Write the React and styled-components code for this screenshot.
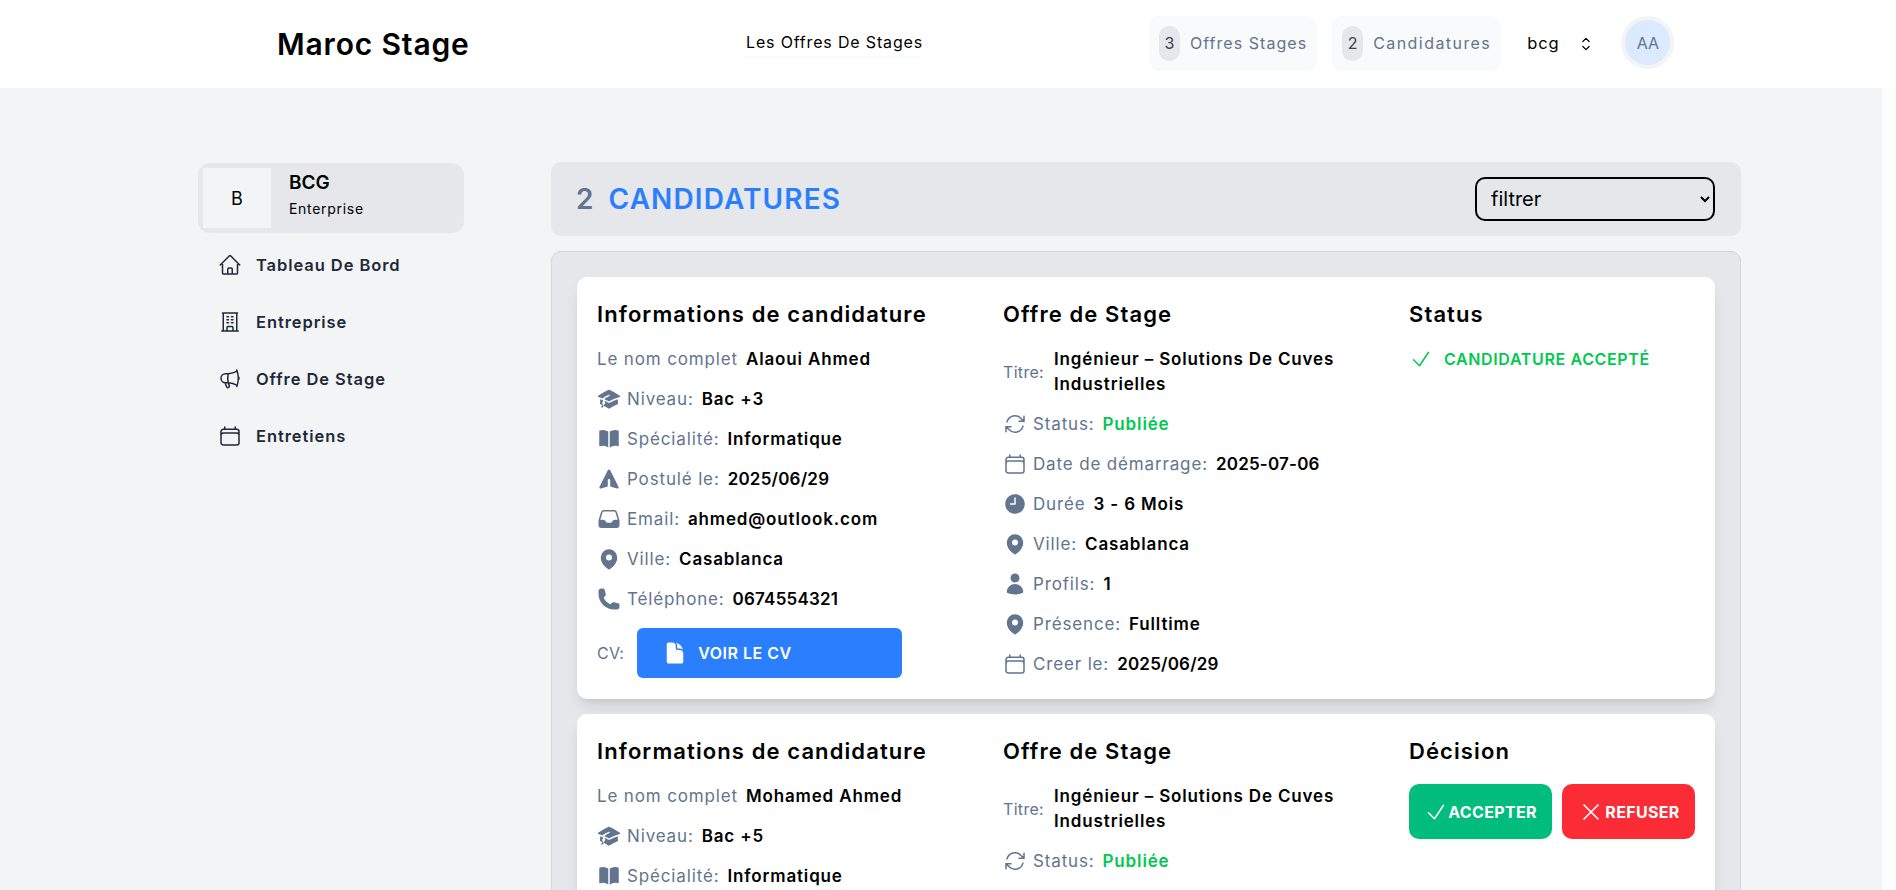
import styled, { createGlobalStyle } from 'styled-components'
import {
    HiAcademicCap, HiBookOpen, HiInbox, HiMapPin, HiPhone, HiClock, HiUser, HiDocument,
    HiOutlineArrowPath, HiOutlineCalendar, HiOutlineCheck, HiOutlineXMark, HiOutlineChevronUpDown,
    HiOutlineHome, HiOutlineBuildingOffice, HiOutlineMegaphone,
} from 'react-icons/hi2'
import { HiPaperAirplane } from 'react-icons/hi'

const GlobalStyle = createGlobalStyle`
    html, body {
        margin: 0;
        height: 100%;
        overflow: hidden;
    }
    body {
        font-family: Inter, "Liberation Sans", sans-serif;
        background: white;
        color: #000;
    }
`
const Page = styled.div`
    height: 100vh;
    display: flex;
`
const Screen = styled.div`
    flex: 1;
    min-width: 0;
    overflow: hidden;
    background: #f3f4f6;
`
const ScrollGutter = styled.div`
    width: 14px;
    margin-top: 88px;
    background: #fdfdfd;
`
const Navbar = styled.nav`
    height: 88px;
    background: white;
    padding-left: 277px;
    display: grid;
    grid-template-columns: 469px 403px auto;
    align-items: center;
`
const Logo = styled.div`
    font-size: 30px;
    font-weight: 600;
    letter-spacing: .028em;
`
const NavLink = styled.a`
    justify-self: start;
    font-size: 16px;
    line-height: 24px;
    padding-bottom: 2px;
    border-bottom: 2px solid #f9fafb;
    letter-spacing: .052em;
`
const NavRight = styled.div`
    display: flex;
    align-items: center;
    margin-bottom: 2px;
`
const CountButton = styled.div`
    height: 55px;
    padding: 0 10px;
    margin-right: 15px;
    display: flex;
    align-items: center;
    gap: 10px;
    background: #f9fafb;
    border-radius: 10px;
    color: #62748e;
    font-size: 16px;
    letter-spacing: ${props => props.$spacing};
    span {
        width: 21px;
        height: 35px;
        display: flex;
        align-items: center;
        justify-content: center;
        background: #e5e7eb;
        border-radius: 10px;
        color: #364153;
        letter-spacing: 0;
    }
`
const CompanySwitch = styled.div`
    display: flex;
    align-items: center;
    gap: 17px;
    margin-left: 11px;
    font-size: 16.5px;
    letter-spacing: .05em;
    svg {
        width: 20px;
        height: 20px;
        margin-top: 1px;
    }
`
const Avatar = styled.div`
    width: 45px;
    height: 45px;
    margin: 0 0 1px 25px;
    display: flex;
    align-items: center;
    justify-content: center;
    background: #dbeafe;
    border: 4px solid #f3f4f6;
    border-radius: 50%;
    color: #62748e;
    font-size: 16px;
`
const Body = styled.div`
    padding: 74px 141px 40px 198px;
    display: grid;
    grid-template-columns: 266px 1fr;
    column-gap: 87px;
    align-items: start;
`
const Sidebar = styled.aside`
    padding-top: 1px;
`
const BrandCard = styled.div`
    height: 70px;
    box-sizing: border-box;
    padding: 5px;
    display: flex;
    align-items: center;
    gap: 18px;
    background: #e5e7eb;
    border-radius: 12px;
`
const BrandSquare = styled.div`
    width: 68px;
    height: 60px;
    display: flex;
    align-items: center;
    justify-content: center;
    background: #f3f4f6;
    font-size: 18px;
`
const BrandText = styled.div`
    padding-bottom: 5px;
`
const BrandName = styled.div`
    font-size: 19px;
    font-weight: 600;
    line-height: 26px;
`
const BrandType = styled.div`
    font-size: 14px;
    line-height: 25px;
    letter-spacing: .05em;
`
const SideMenu = styled.ul`
    list-style: none;
    margin: 3px 0 0;
    padding: 0;
`
const SideItem = styled.li`
    height: 57px;
    padding-left: 20px;
    display: flex;
    align-items: center;
    gap: 14px;
    color: #1e2939;
    font-size: 16.5px;
    font-weight: 600;
    letter-spacing: .056em;
    svg {
        width: 24px;
        height: 24px;
    }
`
const Main = styled.main`
    min-width: 0;
`
const Header = styled.div`
    height: 74px;
    box-sizing: border-box;
    padding: 0 26px 0 25px;
    display: flex;
    align-items: center;
    justify-content: space-between;
    background: #e5e7eb;
    border-radius: 10px;
`
const Title = styled.h1`
    margin: 0;
    display: flex;
    gap: 14px;
    font-size: 28px;
    font-weight: 600;
    letter-spacing: .04em;
    color: #2b7fff;
    span {
        color: #62748e;
    }
`
const FilterSelect = styled.select`
    width: 240px;
    height: 44px;
    padding: 0 10px;
    background: transparent;
    border: 2px solid #000;
    border-radius: 10px;
    font-family: inherit;
    font-size: 20px;
    color: #000;
`
const Panel = styled.div`
    margin-top: 15px;
    padding: 25px;
    display: flex;
    flex-direction: column;
    gap: 15px;
    background: #e5e7eb;
    border: 1px solid #d1d5dc;
    border-radius: 10px;
`
const Card = styled.article`
    padding: 23px 20px 21px;
    display: grid;
    grid-template-columns: 406px 406px 1fr;
    background: white;
    border-radius: 10px;
    box-shadow: 0 10px 15px -3px rgba(0, 0, 0, .1), 0 4px 6px -4px rgba(0, 0, 0, .1);
`
const Column = styled.section`
    display: flex;
    flex-direction: column;
    gap: 16px;
`
const ColumnTitle = styled.h2`
    margin: 0 0 3px;
    font-size: 22px;
    line-height: 28px;
    font-weight: 600;
    letter-spacing: .05em;
`
const Row = styled.div`
    min-height: 24px;
    display: flex;
    align-items: center;
    font-size: 17px;
    white-space: nowrap;
    letter-spacing: .05em;
    svg {
        flex: none;
        width: 24px;
        height: 24px;
        margin-right: 6px;
        color: #62748e;
    }
`
const Label = styled.span`
    color: #62748e;
    margin-right: 8px;
`
const TitreLabel = styled(Label)`
    font-size: 16px;
    letter-spacing: .02em;
    margin-right: 10px;
`
const Value = styled.span`
    font-weight: 600;
    color: ${props => props.$green ? '#00c950' : '#000'};
    line-height: ${props => props.$wrap ? '24.5px' : '24px'};
    letter-spacing: ${props => props.$digits ? '.012em' : 'inherit'};
    white-space: ${props => props.$wrap ? 'normal' : 'nowrap'};
`
const CvButton = styled.button`
    width: 265px;
    height: 50px;
    padding: 0 0 0 26px;
    display: flex;
    align-items: center;
    gap: 11px;
    background: #2b7fff;
    border: none;
    border-radius: 6px;
    color: white;
    font-family: inherit;
    font-size: 16px;
    font-weight: 600;
    letter-spacing: .03em;
    svg {
        margin: 0;
        color: white;
    }
`
const CvRow = styled(Row)`
    margin-top: 1px;
`
const CvLabel = styled(TitreLabel)`
    margin-right: 13px;
`
const StatusLine = styled.div`
    display: flex;
    align-items: center;
    gap: 11px;
    height: 24px;
    color: #00c950;
    font-size: 16px;
    font-weight: 600;
    letter-spacing: .04em;
    svg {
        width: 24px;
        height: 24px;
    }
`
const Decisions = styled.div`
    display: flex;
    gap: 10px;
`
const DecisionButton = styled.button`
    width: ${props => props.$w}px;
    height: 55px;
    padding: 0;
    display: flex;
    align-items: center;
    justify-content: center;
    background: ${props => props.$bg};
    border: none;
    border-radius: 10px;
    color: white;
    font-family: inherit;
    font-size: 16px;
    font-weight: 700;
    letter-spacing: .02em;
    svg {
        width: ${props => props.$icon}px;
        height: ${props => props.$icon}px;
    }
`
const ClockIcon = styled(HiClock)`
    transform: scaleX(-1);
`

const candidatures = [
    {
        nom: 'Alaoui Ahmed', niveau: 'Bac +3', postule: '2025/06/29', email: 'ahmed@outlook.com',
        tel: '0674554321', accepted: true,
    },
    {
        nom: 'Mohamed Ahmed', niveau: 'Bac +5', postule: '2025/06/29', email: 'mohamed@outlook.com',
        tel: '0674554321', accepted: false,
    },
]

const Info = ({ icon, label, value, green, digits }) => (
    <Row>
        {icon}
        <Label>{label}</Label>
        <Value $green={green} $digits={digits}>{value}</Value>
    </Row>
)

const App = () => {
    return (
        <Page>
            <GlobalStyle />
            <Screen>
                <Navbar>
                    <Logo>Maroc Stage</Logo>
                    <NavLink>Les Offres De Stages</NavLink>
                    <NavRight>
                        <CountButton $spacing=".065em"><span>3</span>Offres Stages</CountButton>
                        <CountButton $spacing=".09em"><span>2</span>Candidatures</CountButton>
                        <CompanySwitch>bcg <HiOutlineChevronUpDown /></CompanySwitch>
                        <Avatar>AA</Avatar>
                    </NavRight>
                </Navbar>
                <Body>
                    <Sidebar>
                        <BrandCard>
                            <BrandSquare>B</BrandSquare>
                            <BrandText>
                                <BrandName>BCG</BrandName>
                                <BrandType>Enterprise</BrandType>
                            </BrandText>
                        </BrandCard>
                        <SideMenu>
                            <SideItem><HiOutlineHome />Tableau De Bord</SideItem>
                            <SideItem><HiOutlineBuildingOffice />Entreprise</SideItem>
                            <SideItem><HiOutlineMegaphone />Offre De Stage</SideItem>
                            <SideItem><HiOutlineCalendar />Entretiens</SideItem>
                        </SideMenu>
                    </Sidebar>
                    <Main>
                        <Header>
                            <Title><span>2</span>CANDIDATURES</Title>
                            <FilterSelect defaultValue="">
                                <option value="">filtrer</option>
                            </FilterSelect>
                        </Header>
                        <Panel>
                            {candidatures.map(c => (
                                <Card key={c.nom}>
                                    <Column>
                                        <ColumnTitle>Informations de candidature</ColumnTitle>
                                        <Info label="Le nom complet" value={c.nom} />
                                        <Info icon={<HiAcademicCap />} label="Niveau:" value={c.niveau} />
                                        <Info icon={<HiBookOpen />} label="Spécialité:" value="Informatique" />
                                        <Info icon={<HiPaperAirplane />} label="Postulé le:" value={c.postule} digits />
                                        <Info icon={<HiInbox />} label="Email:" value={c.email} />
                                        <Info icon={<HiMapPin />} label="Ville:" value="Casablanca" />
                                        <Info icon={<HiPhone />} label="Téléphone:" value={c.tel} digits />
                                        <CvRow>
                                            <CvLabel>CV:</CvLabel>
                                            <CvButton><HiDocument />VOIR LE CV</CvButton>
                                        </CvRow>
                                    </Column>
                                    <Column>
                                        <ColumnTitle>Offre de Stage</ColumnTitle>
                                        <Row>
                                            <TitreLabel>Titre:</TitreLabel>
                                            <Value $wrap>Ingénieur – Solutions De Cuves Industrielles</Value>
                                        </Row>
                                        <Info icon={<HiOutlineArrowPath />} label="Status:" value="Publiée" green />
                                        <Info icon={<HiOutlineCalendar />} label="Date de démarrage:" value="2025-07-06" digits />
                                        <Info icon={<ClockIcon />} label="Durée" value="3 - 6 Mois" />
                                        <Info icon={<HiMapPin />} label="Ville:" value="Casablanca" />
                                        <Info icon={<HiUser />} label="Profils:" value="1" />
                                        <Info icon={<HiMapPin />} label="Présence:" value="Fulltime" />
                                        <Info icon={<HiOutlineCalendar />} label="Creer le:" value="2025/06/29" digits />
                                    </Column>
                                    <Column>
                                        {c.accepted ? (
                                            <>
                                                <ColumnTitle>Status</ColumnTitle>
                                                <StatusLine><HiOutlineCheck />CANDIDATURE ACCEPTÉ</StatusLine>
                                            </>
                                        ) : (
                                            <>
                                                <ColumnTitle>Décision</ColumnTitle>
                                                <Decisions>
                                                    <DecisionButton $w={143} $icon={24} $bg="#00bc7d"><HiOutlineCheck />ACCEPTER</DecisionButton>
                                                    <DecisionButton $w={133} $icon={28} $bg="#fb2c36"><HiOutlineXMark />REFUSER</DecisionButton>
                                                </Decisions>
                                            </>
                                        )}
                                    </Column>
                                </Card>
                            ))}
                        </Panel>
                    </Main>
                </Body>
            </Screen>
            <ScrollGutter />
        </Page>
    )
}

export default App
